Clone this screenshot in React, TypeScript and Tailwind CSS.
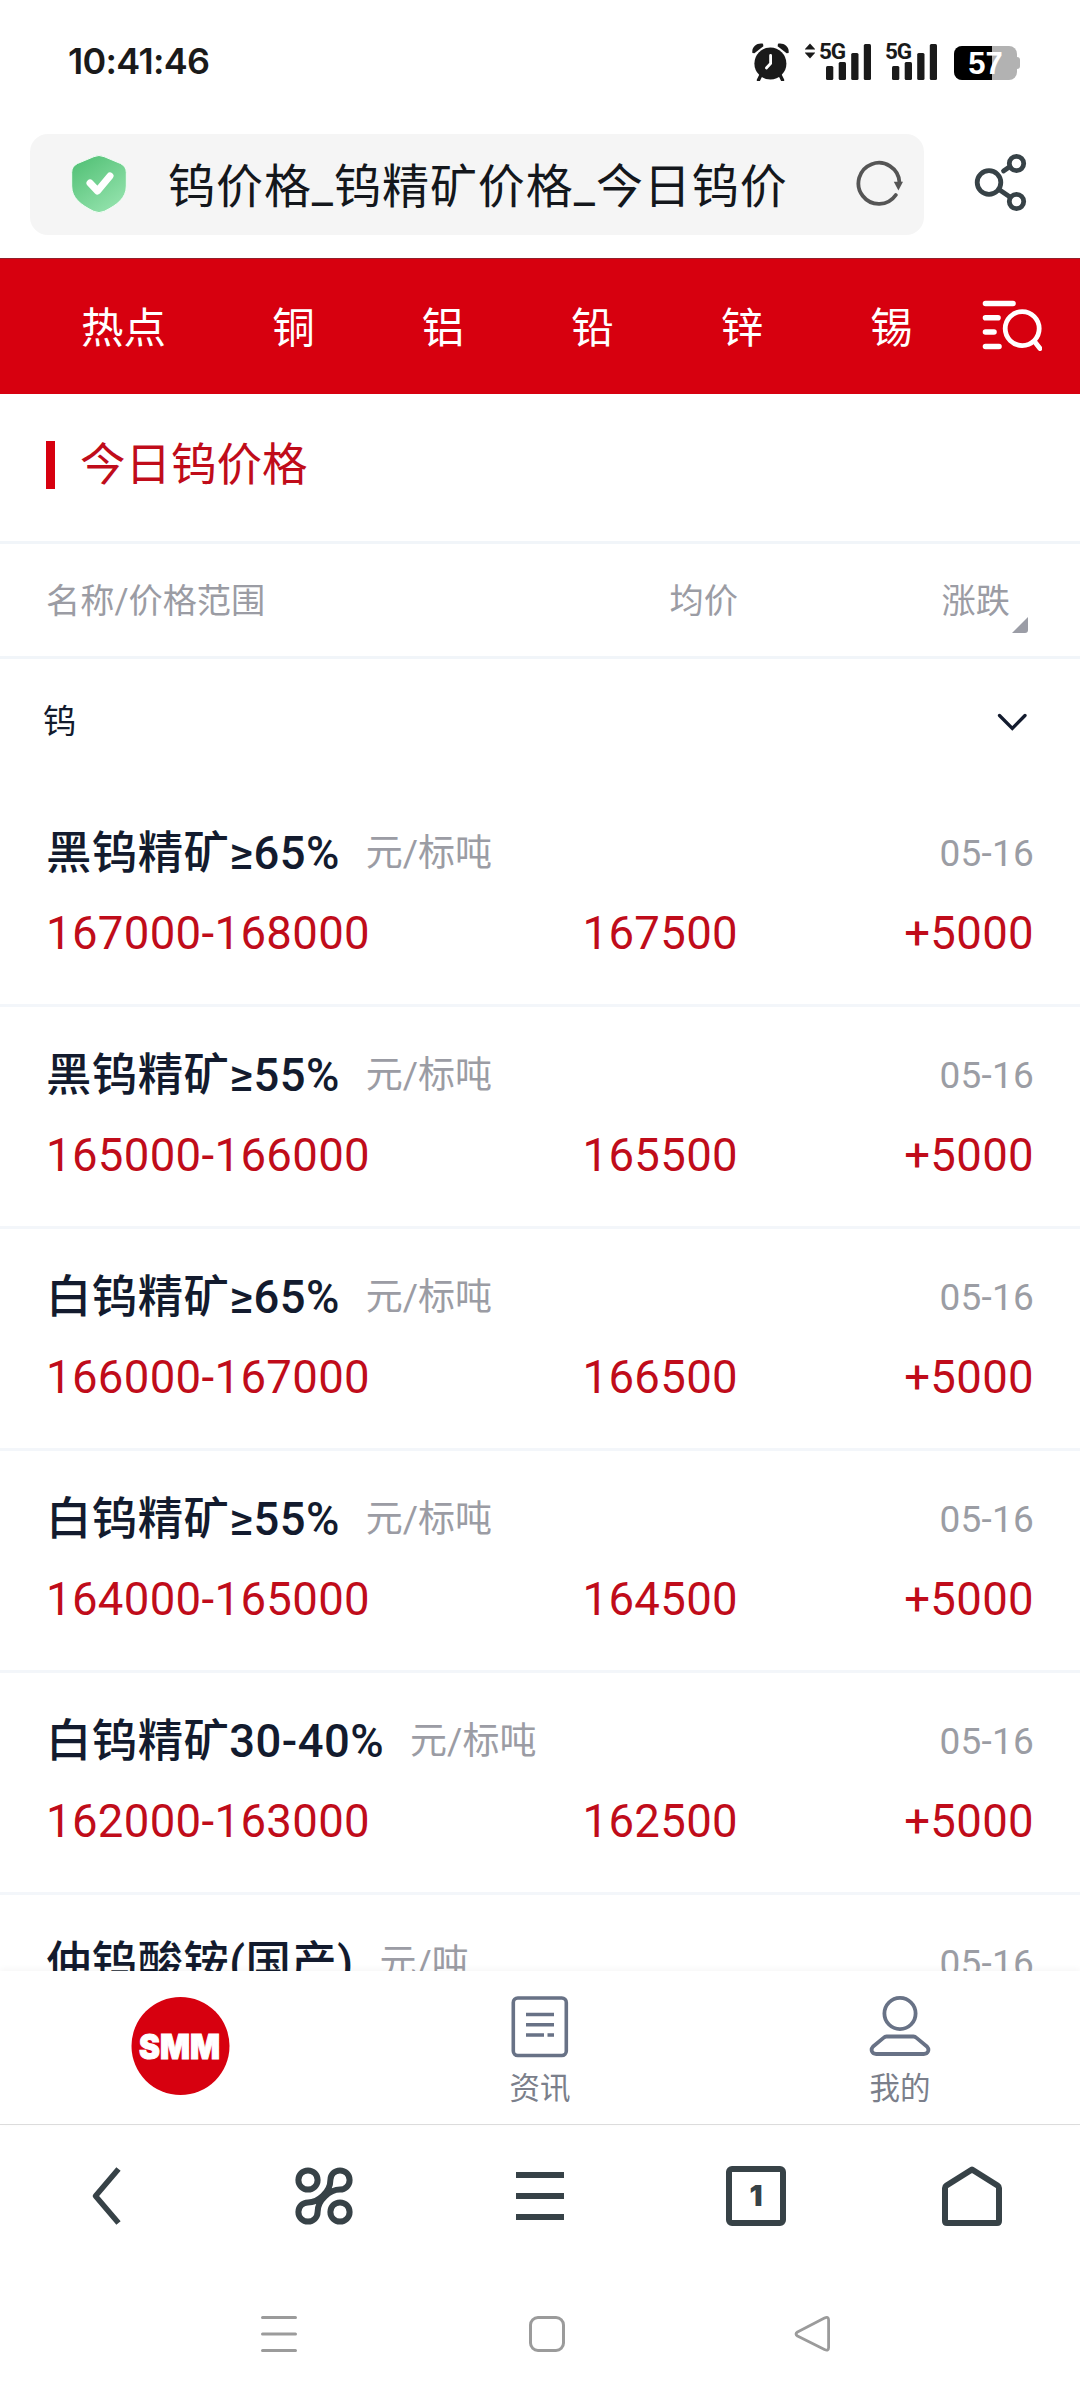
import type { ReactNode } from 'react';

interface PriceRow {
  name: string;
  unit: string;
  date: string;
  range: string;
  avg: string;
  change: string;
}

const TABS = ['铜', '铝', '铅', '锌', '锡'];

const ROWS: PriceRow[] = [
  { name: '黑钨精矿≥65%', unit: '元/标吨', date: '05-16', range: '167000-168000', avg: '167500', change: '+5000' },
  { name: '黑钨精矿≥55%', unit: '元/标吨', date: '05-16', range: '165000-166000', avg: '165500', change: '+5000' },
  { name: '白钨精矿≥65%', unit: '元/标吨', date: '05-16', range: '166000-167000', avg: '166500', change: '+5000' },
  { name: '白钨精矿≥55%', unit: '元/标吨', date: '05-16', range: '164000-165000', avg: '164500', change: '+5000' },
  { name: '白钨精矿30-40%', unit: '元/标吨', date: '05-16', range: '162000-163000', avg: '162500', change: '+5000' },
  { name: '仲钨酸铵(国产)', unit: '元/吨', date: '05-16', range: '', avg: '', change: '' },
];

function Signal() {
  return (
    <div className="relative w-[51px] h-[38px]">
      <span className="absolute left-[-1px] top-0 text-[22.5px] leading-[17px] font-bold tracking-[-1.2px] font-['Roboto',sans-serif]">
        5G
      </span>
      <svg className="absolute inset-0" width="51" height="38" viewBox="0 0 51 38" fill="#1a1a1a">
        <rect x="6" y="23" width="7.3" height="14" rx="1.5" />
        <rect x="18.7" y="19" width="7.3" height="18" rx="1.5" />
        <rect x="31.2" y="10" width="7.3" height="27" rx="1.5" />
        <rect x="43.8" y="1" width="7.2" height="36" rx="1.5" />
      </svg>
    </div>
  );
}

function StatusBar() {
  return (
    <div className="h-[134px] shrink-0 flex items-start justify-between pl-[68px] pr-[60px] pt-[43px] text-[#1a1a1a]">
      <span className="text-[36px] leading-[37px] font-semibold tracking-[-0.7px] font-['Inter',sans-serif]">
        10:41:46
      </span>
      <div className="flex items-start">
        {/* 闹钟 */}
        <svg width="37" height="38" viewBox="0 0 37 38" fill="#1a1a1a">
          <path d="M0.4 10C-0.6 4 5 -0.4 11 0.8L11.4 3.2L2.4 10.2Z" />
          <path d="M36.6 10C37.6 4 32 -0.4 26 0.8L25.6 3.2L34.6 10.2Z" />
          <circle cx="18.4" cy="20.5" r="16" />
          <path d="M9 32L6.5 37M28 32L30.5 37" stroke="#1a1a1a" strokeWidth="3.4" strokeLinecap="round" />
          <path d="M18.6 12.5V20.5L14.4 25" fill="none" stroke="#fff" strokeWidth="2.8" strokeLinecap="round" />
        </svg>
        <svg className="ml-4" width="10" height="16" viewBox="0 0 10 16" fill="#1a1a1a">
          <path d="M5 0.5L10 6V6.6H0V6Z" />
          <path d="M5 15.5L10 10V9.4H0V10Z" />
        </svg>
        <div className="ml-[5px] flex gap-[15px]">
          <Signal />
          <Signal />
        </div>
        <div className="ml-[17px] mt-[3px] flex items-center">
          <div className="relative w-[63px] h-[34px] rounded-[8px] overflow-hidden bg-[#b2b2b2]">
            <div className="w-[38px] h-full bg-black" />
            <span className="absolute inset-0 text-center text-white text-[31px] leading-[36px] font-bold font-['Liberation_Sans',sans-serif]">
              57
            </span>
          </div>
          <div className="w-[3px] h-[12px] rounded-r-[3px] bg-[#b2b2b2]" />
        </div>
      </div>
    </div>
  );
}

function AddressBar() {
  return (
    <div className="h-[124px] shrink-0 flex items-start pl-[30px]">
      <div className="w-[894px] h-[101px] rounded-[18px] bg-[#f5f5f5] flex items-center pl-[41px] pr-[21px]">
        <svg width="56" height="60" viewBox="0 0 56 60" className="shrink-0 mt-[-2px]">
          <defs>
            <linearGradient id="shield" x1="0.1" y1="0.1" x2="0.7" y2="1">
              <stop offset="0" stopColor="#55c278" />
              <stop offset="1" stopColor="#93e2ac" />
            </linearGradient>
          </defs>
          <path
            d="M23 2.6Q28 0.4 33 2.6L49.5 9.5Q55.3 12.5 55.3 18.5V32C55.3 44 46 51 33.5 57.2Q28 60 22.5 57.2C10 51 0.7 44 0.7 32V18.5Q0.7 12.5 6.5 9.5Z"
            fill="url(#shield)"
            stroke="#f2fdf5"
            strokeWidth="1"
          />
          <path d="M19 29L26.5 37L39 22" fill="none" stroke="#fff" strokeWidth="7" strokeLinecap="round" strokeLinejoin="round" />
        </svg>
        <span className="ml-[41px] mt-[4px] text-[47px] leading-[60px] tracking-[0.95px] text-[#14171c] whitespace-nowrap">
          钨价格_钨精矿价格_今日钨价
        </span>
        <svg width="52" height="48" viewBox="0 0 52 48" className="ml-auto mt-[-1px] shrink-0">
          <path d="M44.8 35A20.5 20.5 0 1 1 48.4 22" fill="none" stroke="#555" strokeWidth="3.8" strokeLinecap="round" />
          <path d="M42.8 21.8H52L47.4 30.5Z" fill="#555" />
        </svg>
      </div>
      <svg className="ml-[50px] mt-[18px]" width="54" height="60" viewBox="0 0 54 60" fill="none" stroke="#374247" strokeWidth="4.8">
        <circle cx="15" cy="30.5" r="11.8" />
        <circle cx="42.5" cy="11.5" r="7.2" />
        <circle cx="42.5" cy="49.5" r="7.2" />
        <path d="M29.5 19L36 14.5" strokeLinecap="round" />
        <path d="M25 37.5L36 45" />
      </svg>
    </div>
  );
}

function MetalTabs() {
  return (
    <div className="h-[136px] shrink-0 bg-[#d7000f] border-t border-[#92202a] flex items-center text-white text-[42.5px] leading-[60px]">
      <span className="w-[247px] mt-[5px] text-center">热点</span>
      {TABS.map((t, i) => (
        <span key={t} className={i === 0 ? 'w-[93px] mt-[5px] text-center' : 'w-[93px] mt-[5px] ml-[56.5px] text-center'}>
          {t}
        </span>
      ))}
      <svg className="ml-auto mr-[38px] mt-[-4px]" width="64" height="52" viewBox="0 0 64 52" fill="none" stroke="#fff" strokeLinecap="round">
        <path d="M7.5 4.5H35M7.5 18.8H20M7.500 33H16M7.500 47.500H21" strokeWidth="5.6" />
        <circle cx="44.2" cy="29.6" r="17" strokeWidth="4.8" />
        <path d="M56.500 42.500L62 49.500" strokeWidth="5" />
      </svg>
    </div>
  );
}

function Row({ row }: { row: PriceRow }) {
  return (
    <div className="h-[222px] shrink-0 border-b-[3px] border-[#f3f6fa] px-[46px] pt-[43px]">
      <div className="h-[52px] flex items-center justify-between">
        <div className="flex items-center">
          <span className="text-[45.4px] leading-[52px] tracking-[0.45px] font-medium text-[#131b2e]">{row.name}</span>
          <span className="ml-[26px] text-[37px] leading-[52px] text-[#9b9ca4]">{row.unit}</span>
        </div>
        <span className="text-[37px] leading-[52px] tracking-[0.2px] text-[#9b9da4]">{row.date}</span>
      </div>
      <div className="mt-[28px] flex text-[45.5px] leading-[52px] tracking-[0.35px] text-[#c00c1a]">
        <span className="w-[440px]">{row.range}</span>
        <span className="w-[252px] text-right">{row.avg}</span>
        <span className="flex-1 text-right">{row.change}</span>
      </div>
    </div>
  );
}

function SiteNavItem({ label, children }: { label: string; children: ReactNode }) {
  return (
    <div className="flex-1 flex flex-col items-center pt-[23px]">
      {children}
      <span className="mt-[11px] text-[30.5px] leading-[40px] text-[#7b7f8b]">{label}</span>
    </div>
  );
}

function SiteNav() {
  return (
    <div className="relative h-[154px] shrink-0 bg-white border-b border-[#dcdcdc] flex shadow-[0_-2px_6px_rgba(0,0,0,0.04)]">
      <div className="flex-1 flex justify-center pt-[25px]">
        <svg width="100" height="100" viewBox="0 0 100 100">
          <circle cx="50.5" cy="50" r="49" fill="#d7000f" />
          <text
            x="9"
            y="62.500"
            fontSize="33.5"
            fontWeight="900"
            fontFamily="Inter, sans-serif"
            fill="#fff"
            stroke="#fff"
            strokeWidth="1"
            textLength="81"
            lengthAdjust="spacingAndGlyphs"
          >
            SMM
          </text>
        </svg>
      </div>
      <SiteNavItem label="资讯">
        <svg width="62" height="64" viewBox="0 0 62 64" fill="none" stroke="#687286" strokeWidth="3.6">
          <rect x="4.3" y="4" width="53" height="57.5" rx="4.5" />
          <path d="M17 20.5H45M17 30.7H45M17 41H35M38.5 41H45" />
        </svg>
      </SiteNavItem>
      <SiteNavItem label="我的">
        <svg width="62" height="64" viewBox="0 0 62 64" fill="none" stroke="#687286" strokeWidth="3.8">
          <circle cx="31" cy="19.5" r="15.6" />
          <path
            d="M17.500 42.500Q16 42.500 14.500 43.900L4.100 52.500C1 56 3.200 60 7.200 60H54.800C58.800 60 61 56 57.900 52.500L47.500 43.900Q46 42.500 44.500 42.500Z"
            strokeLinejoin="round"
          />
        </svg>
      </SiteNavItem>
    </div>
  );
}

function BrowserBar() {
  const cell = 'flex-1 flex justify-center';
  return (
    <div className="h-[142px] shrink-0 flex items-center">
      <div className={cell}>
        <svg width="60" height="60" viewBox="0 0 60 60" fill="none" stroke="#374247" strokeWidth="5.6" strokeLinejoin="round">
          <path d="M40.5 3L17.5 30L40.5 57" />
        </svg>
      </div>
      <div className={cell}>
        <svg width="60" height="60" viewBox="0 0 60 60" fill="none" stroke="#374247" strokeWidth="6">
          <circle cx="14" cy="14" r="9.6" />
          <circle cx="46" cy="46" r="9.6" />
          <path d="M14 36.4A9.6 9.6 0 1 0 23.6 46C23.6 34 36 23.6 46 23.6A9.6 9.6 0 1 0 36.4 14C36.4 26 24 36.4 14 36.4Z" />
          <path d="M24 36L36 24" />
        </svg>
      </div>
      <div className={cell}>
        <svg width="60" height="60" viewBox="0 0 60 60" stroke="#374247" strokeWidth="6">
          <path d="M6 9H54M6 30H54M6 51H54" />
        </svg>
      </div>
      <div className={cell}>
        <div className="w-[60px] h-[60px] rounded-[6px] border-[6px] border-[#374247] flex items-center justify-center text-[#374247] text-[29px] leading-[30px] font-black font-['Inter',sans-serif]">
          1
        </div>
      </div>
      <div className={cell}>
        <svg width="60" height="60" viewBox="0 0 60 60" fill="none" stroke="#374247" strokeWidth="6" strokeLinejoin="round">
          <path d="M30 3.5L55.5 19.5Q57 20.5 57 22V55Q57 57 55 57H5Q3 57 3 55V22Q3 20.5 4.5 19.5Z" />
        </svg>
      </div>
    </div>
  );
}

function SystemNav() {
  return (
    <div className="flex-1 flex items-start pl-[259px] pt-[47px]">
      <svg width="40" height="40" viewBox="0 0 40 40" stroke="#9b9b9b" strokeWidth="3" strokeLinecap="round">
        <path d="M3.5 3.5H36.5M3.5 20H36.5M3.5 36.5H36.5" />
      </svg>
      <div className="ml-[230px] mt-[2px] w-[36px] h-[36px] rounded-[9px] border-[3px] border-[#9b9b9b]" />
      <svg className="ml-[228px]" width="40" height="40" viewBox="0 0 40 40" fill="none" stroke="#9b9b9b" strokeWidth="2.8">
        <path d="M31.5 4Q35.6 2 35.6 6V33.5Q35.6 37.5 31.5 35.5L4.5 22Q1.5 20 4.5 18Z" strokeLinejoin="round" />
      </svg>
    </div>
  );
}

export default function App() {
  return (
    <div className="w-[1080px] h-[2400px] bg-white flex flex-col overflow-hidden font-['Roboto','Noto_Sans_CJK_SC',sans-serif]">
      <StatusBar />
      <AddressBar />
      <MetalTabs />

      {/* 标题 */}
      <div className="h-[150px] shrink-0 border-b-[3px] border-[#f1f5f9] flex items-center pl-[46px]">
        <div className="w-[9px] h-[48px] mt-[-5px] bg-[#d7000f]" />
        <h1 className="ml-[25px] mt-[-4px] text-[45.5px] leading-[60px] text-[#c00c1a]">今日钨价格</h1>
      </div>

      {/* 表头 */}
      <div className="h-[115px] shrink-0 border-b-[3px] border-[#f1f5f9] flex items-center pl-[46px] text-[34.2px] leading-[50px] text-[#9b9ca4]">
        <span className="w-[440px] mt-[2px]">名称/价格范围</span>
        <span className="w-[252px] mt-[2px] text-right">均价</span>
        <span className="w-[272px] mt-[2px] text-right">涨跌</span>
        <svg className="ml-[2px] mt-[50px]" width="16" height="16" viewBox="0 0 16 16" fill="#9b9da6">
          <path d="M16 0V13Q16 16 13 16H0Z" />
        </svg>
      </div>

      <div className="h-[126px] shrink-0 flex items-center justify-between pl-[43px] pr-[52px] text-[#131b2e]">
        <span className="text-[33px] leading-[50px] mt-[-1px]">钨</span>
        <svg width="31" height="20" viewBox="0 0 31 20" fill="none" stroke="#131b2e" strokeWidth="3.3" strokeLinecap="round">
          <path d="M2.5 3.5L15.3 16.5L28 3.5" />
        </svg>
      </div>

      <div className="h-[1186px] shrink-0 flex flex-col overflow-hidden">
        {ROWS.map((r) => (
          <Row key={r.name} row={r} />
        ))}
      </div>

      <SiteNav />
      <BrowserBar />
      <SystemNav />
    </div>
  );
}
